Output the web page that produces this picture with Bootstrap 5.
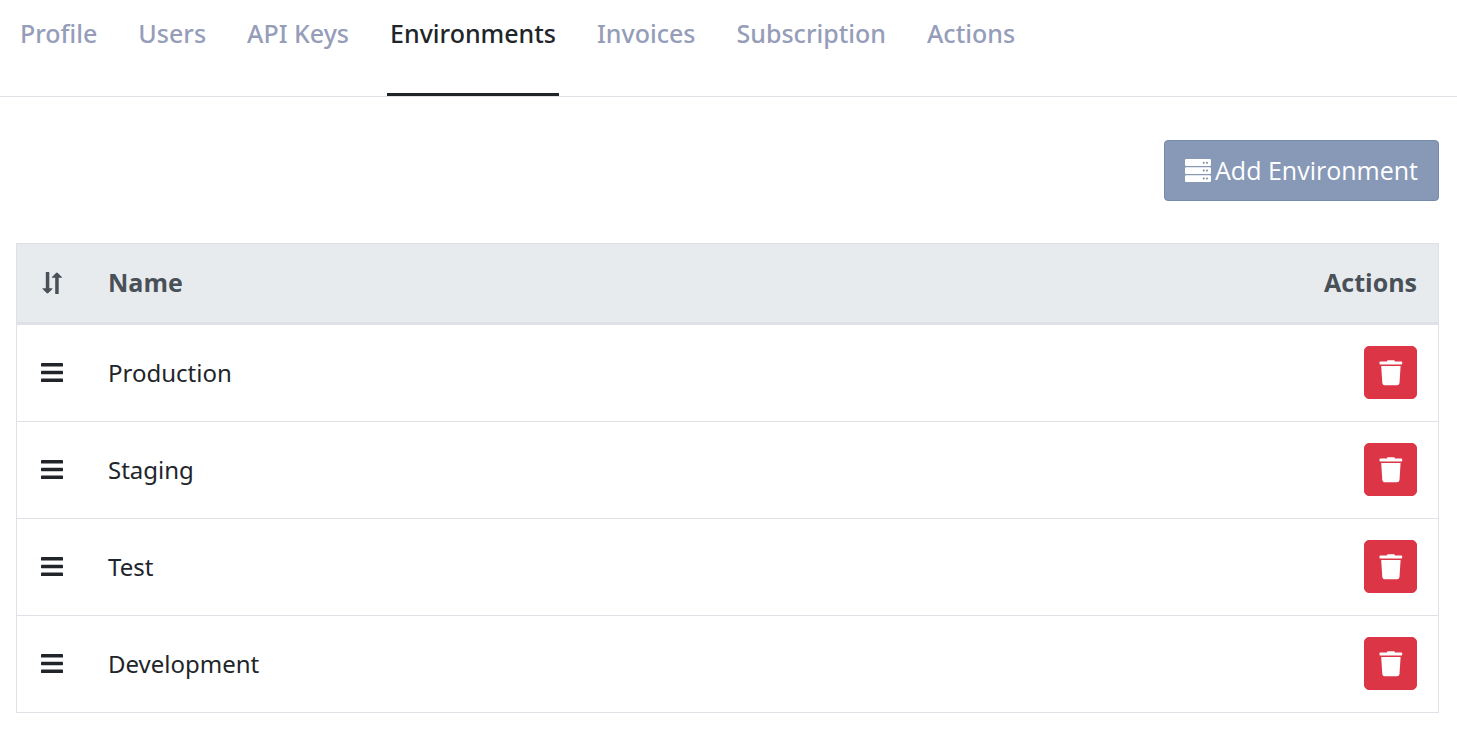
<!DOCTYPE html>
<html lang="en">
<head>
<meta charset="utf-8">
<meta name="viewport" content="width=device-width, initial-scale=1">
<title>Environments</title>
<link href="https://cdn.jsdelivr.net/npm/bootstrap@5.3.0/dist/css/bootstrap.min.css" rel="stylesheet">
<style>
body { font-family: "Noto Sans", "Open Sans", sans-serif; font-size: 25px; line-height: 36px; color: #212529; }
.account-tabs { column-gap: 35px; padding: 0 17px; border-bottom: 1px solid #dee2e6; }
.account-tabs .nav-link { padding: 15px 3px 42px; border-bottom: 3px solid transparent; font-weight: 500; color: #959db9; }
.account-tabs .nav-link.active { color: #212529; border-color: #212529; }
.account-main { padding: 43px 18px 30px 16px; }
.btn-add { --bs-btn-color: #fff; --bs-btn-bg: #8799b7; --bs-btn-border-color: #768aab; --bs-btn-hover-color: #fff; --bs-btn-hover-bg: #768aab; font-family: "Open Sans", sans-serif; font-size: 25px; line-height: 37px; padding: 11px 20px; border-radius: 4px; gap: 4px; }
.env-table { margin-top: 42px; border: 1px solid #dee2e6; --bs-table-color: #212529; }
.env-table th { padding: 20px 21px 22px; }
.env-table td { padding: 21px 21px 22px; font-size: 24px; border-color: #dee2e6; }
.env-table thead th { background: #e8ebee; color: #495057; border-bottom: 3px solid #dee2e6; font-weight: 700; font-family: "Open Sans", sans-serif; vertical-align: middle; }
.env-table .handle { width: 70px; }
.env-table svg, .btn-add svg { display: block; }
.btn-trash { width: 53px; height: 53px; border-radius: 5px; }
</style>
<script src="https://cdn.jsdelivr.net/npm/bootstrap@5.3.0/dist/js/bootstrap.bundle.min.js"></script>
</head>
<body>
<svg class="d-none" aria-hidden="true">
  <symbol id="bars" viewBox="0 0 26 26"><g fill="currentColor"><rect x="2" y="3" width="22" height="3.600" rx=".7"/><rect x="2" y="10.700" width="22" height="3.600" rx=".7"/><rect x="2" y="18.500" width="22" height="3.600" rx=".7"/></g></symbol>
  <symbol id="trash" viewBox="0 0 24 26"><path fill="currentColor" d="M1.300 1.500h6.500L8.500.2h6.800l.7 1.300h6.400q.8 0 .8.800v1.500q0 .8-.8.800H1.300q-.8 0-.8-.8V2.300q0-.8.800-.8zM2.200 6h19.400l-1.100 17q-.2 2.300-2.500 2.300H5.800q-2.300 0-2.500-2.300z"/></symbol>
</svg>
<nav aria-label="Account">
  <div class="nav account-tabs">
    <a class="nav-link" href="#">Profile</a>
    <a class="nav-link" href="#">Users</a>
    <a class="nav-link" href="#">API Keys</a>
    <a class="nav-link active" aria-current="page" href="#">Environments</a>
    <a class="nav-link" href="#">Invoices</a>
    <a class="nav-link" href="#">Subscription</a>
    <a class="nav-link" href="#">Actions</a>
  </div>
</nav>
<main class="account-main">
  <div class="d-flex justify-content-end">
    <button type="button" class="btn btn-add d-flex align-items-center">
      <svg width="26" height="24" viewBox="0 0 26 24" aria-hidden="true"><path fill="#fff" fill-rule="evenodd" d="M1.200 0h23.600Q26 0 26 1.200v4.600Q26 7 24.800 7H1.200Q0 7 0 5.800V1.200Q0 0 1.200 0zM1.200 8.200h23.600q1.200 0 1.200 1.200v4.400q0 1.200-1.200 1.200H1.200Q0 15 0 13.800V9.400q0-1.200 1.200-1.200zM1.200 16.200h23.600q1.200 0 1.200 1.200v4.400q0 1.200-1.200 1.200H1.200Q0 23 0 21.800v-4.400q0-1.200 1.200-1.200z"/><g fill="#768aab"><circle cx="18.700" cy="3.700" r="1"/><circle cx="22" cy="3.700" r="1"/><circle cx="18.700" cy="11.600" r="1"/><circle cx="22" cy="11.600" r="1"/><circle cx="18.700" cy="19.600" r="1"/><circle cx="22" cy="19.600" r="1"/></g></svg>
      <span>Add Environment</span>
    </button>
  </div>
  <table class="table env-table align-middle mb-0">
    <thead>
      <tr>
        <th scope="col" class="handle" aria-label="Order"><svg width="28" height="26" viewBox="0 -1 28 26" aria-hidden="true"><path fill="currentColor" d="M7.800 2.500q0-.5.500-.5h2.500q.5 0 .5.500v15.700h2.700q1.100 0 .4.900l-4 4q-.9.800-1.800 0l-4-4q-.7-.9.400-.9h2.800zM17.200 23.500q0 .5.500.5h2.500q.5 0 .5-.5V7.800h2.700q1.100 0 .4-.9l-4-4q-.9-.8-1.800 0l-4 4q-.7.900.4.900h2.800z"/></svg></th>
        <th scope="col">Name</th>
        <th scope="col" class="text-end">Actions</th>
      </tr>
    </thead>
    <tbody>
      <tr>
        <td><svg width="28" height="26" aria-hidden="true"><use href="#bars"/></svg></td>
        <td>Production</td>
        <td><button type="button" class="btn btn-danger btn-trash p-0 ms-auto d-flex align-items-center justify-content-center" aria-label="Delete Production"><svg width="24" height="26" aria-hidden="true"><use href="#trash"/></svg></button></td>
      </tr>
      <tr>
        <td><svg width="28" height="26" aria-hidden="true"><use href="#bars"/></svg></td>
        <td>Staging</td>
        <td><button type="button" class="btn btn-danger btn-trash p-0 ms-auto d-flex align-items-center justify-content-center" aria-label="Delete Staging"><svg width="24" height="26" aria-hidden="true"><use href="#trash"/></svg></button></td>
      </tr>
      <tr>
        <td><svg width="28" height="26" aria-hidden="true"><use href="#bars"/></svg></td>
        <td>Test</td>
        <td><button type="button" class="btn btn-danger btn-trash p-0 ms-auto d-flex align-items-center justify-content-center" aria-label="Delete Test"><svg width="24" height="26" aria-hidden="true"><use href="#trash"/></svg></button></td>
      </tr>
      <tr>
        <td><svg width="28" height="26" aria-hidden="true"><use href="#bars"/></svg></td>
        <td>Development</td>
        <td><button type="button" class="btn btn-danger btn-trash p-0 ms-auto d-flex align-items-center justify-content-center" aria-label="Delete Development"><svg width="24" height="26" aria-hidden="true"><use href="#trash"/></svg></button></td>
      </tr>
    </tbody>
  </table>
</main>
</body>
</html>
